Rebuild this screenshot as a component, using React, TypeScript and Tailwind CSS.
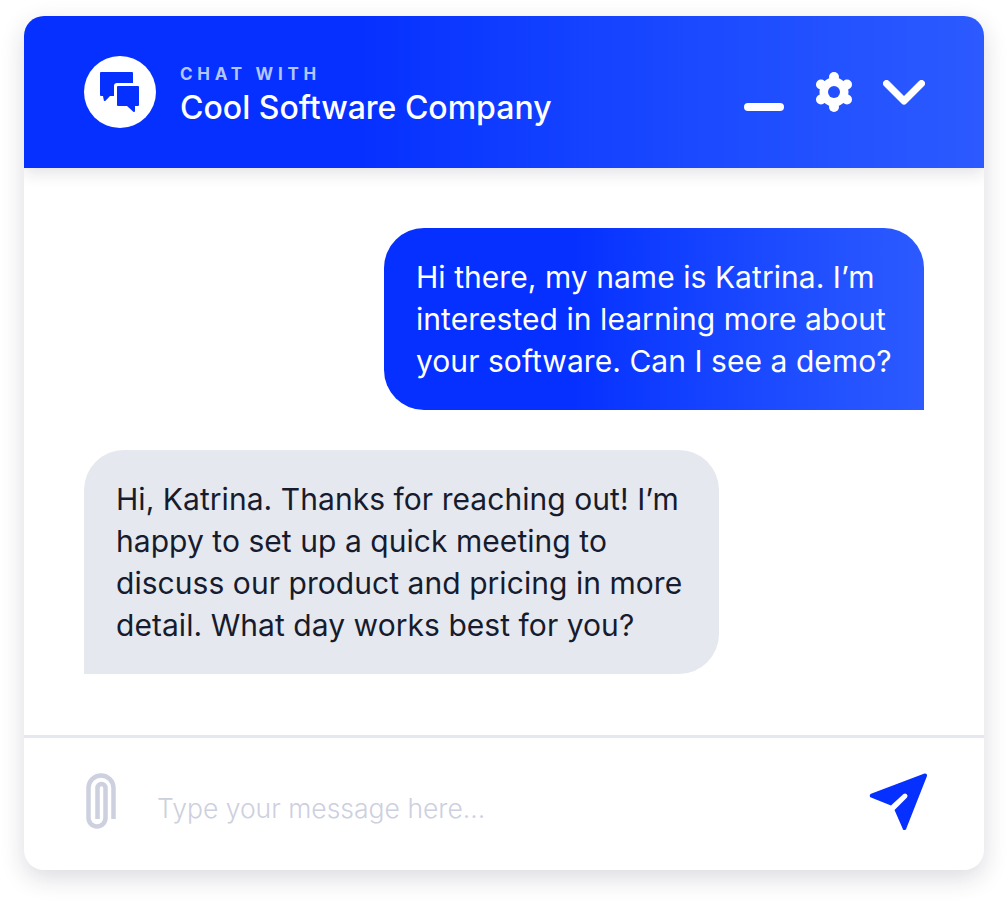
import React from "react";

const font = { fontFamily: 'Inter, sans-serif' };

function ChatIcon() {
  return (
    <svg width="40" height="40" viewBox="0 0 40 40" fill="#0630ff">
      <path d="M1 0 H32 a1 1 0 0 1 1 1 V11 H17 a3 3 0 0 0-3 3 V24 H10 L5.5 28.8 a1 1 0 0 1-1.7-.6 L3 24 H1 a1 1 0 0 1-1-1 V1 a1 1 0 0 1 1-1 Z" />
      <path d="M18 14 H38 a1 1 0 0 1 1 1 V33 a1 1 0 0 1-1 1 H35 V39 a1 1 0 0 1-1.7.7 L27 34 H18 a1 1 0 0 1-1-1 V15 a1 1 0 0 1 1-1 Z" />
    </svg>
  );
}

function Gear() {
  return (
    <svg width="38" height="42" viewBox="0 0 38 42">
      <g fill="#fff">
        <circle cx="19" cy="21" r="14.5" />
        <circle cx="19" cy="6" r="5" />
        <circle cx="19" cy="36" r="5" />
        <circle cx="6" cy="13.5" r="5" />
        <circle cx="32" cy="13.5" r="5" />
        <circle cx="6" cy="28.5" r="5" />
        <circle cx="32" cy="28.5" r="5" />
      </g>
      <circle cx="19" cy="21" r="6" fill="#2250ff" />
    </svg>
  );
}

export default function App() {
  return (
    <div className="w-[1008px] h-[902px] bg-white pt-4 px-6" style={font}>
      <div className="w-[960px] h-[854px] bg-white rounded-[20px] flex flex-col overflow-hidden shadow-[0_8px_24px_rgba(30,30,60,0.16)]">
        <header className="h-[152px] shrink-0 bg-gradient-to-r from-[#0630ff] from-35% to-[#2c5aff] flex items-center pl-[60px] pr-[59px] shadow-[0_4px_16px_rgba(30,30,60,0.14)] z-10">
          <div className="w-[72px] h-[72px] rounded-full bg-white flex items-center justify-center shrink-0">
            <ChatIcon />
          </div>
          <div className="ml-6 mt-[9px] flex flex-col">
            <div className="text-[17px] leading-[20px] font-bold tracking-[4.75px] text-[#b3c5ff]">CHAT WITH</div>
            <div className="text-[32px] leading-[44px] mt-[2px] font-medium text-white whitespace-nowrap">Cool Software Company</div>
          </div>
          <div className="ml-auto flex items-center">
            <div className="w-10 h-2 rounded-full bg-white mt-[30px]" />
            <div className="ml-[31px]"><Gear /></div>
            <svg className="ml-[30px]" width="42" height="25" viewBox="0 0 42 25" fill="none">
              <path d="M3.5 3.5 L21 21 L38.5 3.5" stroke="#fff" strokeWidth="7" strokeLinecap="round" strokeLinejoin="round" />
            </svg>
          </div>
        </header>

        <main className="flex-1 flex flex-col px-[60px] pt-[60px] gap-10">
          <div className="self-end w-[540px] h-[182px] rounded-[40px] rounded-br-none bg-gradient-to-r from-[#0630ff] from-35% to-[#2c5aff] px-8 py-7 text-[30px] leading-[42px] tracking-[0.05px] text-white whitespace-nowrap">
            Hi there, my name is Katrina. I’m<br />
            interested in learning more about<br />
            your software. Can I see a demo?
          </div>
          <div className="self-start w-[635px] h-[224px] rounded-[40px] rounded-bl-none bg-[#e6e8f0] px-8 py-7 text-[30px] leading-[42px] tracking-[0.05px] text-[#161c2d] whitespace-nowrap">
            Hi, Katrina. Thanks for reaching out! I’m<br />
            happy to set up a quick meeting to<br />
            discuss our product and pricing in more<br />
            detail. What day works best for you?
          </div>
        </main>

        <footer className="h-[135px] shrink-0 border-t-[3px] border-[#e6e8f0] flex items-center pl-[60px] pr-[55px]">
          <svg className="-mt-[6px]" width="34" height="56" viewBox="0 0 34 56" fill="none">
            <path d="M29.5 46 V15 a12.5 12.5 0 0 0-25 0 V45 a8.5 8.5 0 0 0 17 0 V15 a4 4 0 0 0-8 0 V46" stroke="#cdd0de" strokeWidth="4.5" />
          </svg>
          <div className="ml-[39px] mt-2 text-[26.5px] leading-[36px] font-light text-[#cdd0de] whitespace-nowrap">Type your message here...</div>
          <svg className="ml-auto -mt-[4px]" width="60" height="60" viewBox="0 0 60 60">
            <path
              fill="#0630ff"
              d="M55.5 1.5 a2 2 0 0 1 2.5 2.5 L37.5 56 a2 2 0 0 1-4 .2 L25.5 38 L38 25.5 a2.5 2.5 0 0 0-3.5-3.5 L22 33.5 L2 25.5 a2 2 0 0 1 0-3.7 Z"
            />
          </svg>
        </footer>
      </div>
    </div>
  );
}
